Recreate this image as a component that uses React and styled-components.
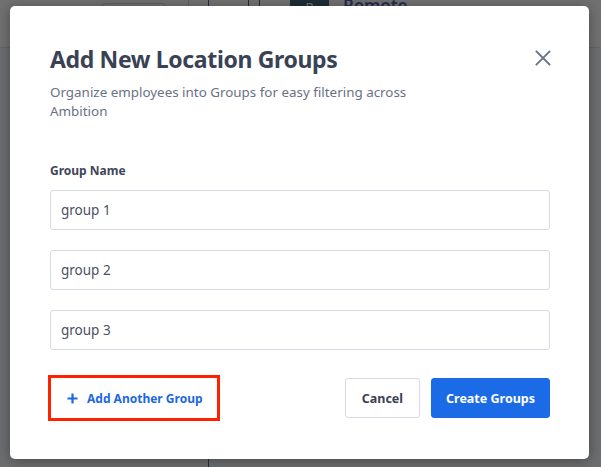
import React from 'react';
import styled, { createGlobalStyle } from 'styled-components';

const GlobalStyle = createGlobalStyle`
  html, body {
    margin: 0;
    padding: 0;
    width: 601px;
    height: 467px;
    overflow: hidden;
    font-family: "Noto Sans", "Open Sans", sans-serif;
    background: #ffffff;
  }
  * { box-sizing: border-box; }
`;

const Page = styled.div`
  position: relative;
  width: 601px;
  height: 467px;
  overflow: hidden;
  background: #f4f5f8;
`;

const TopBar = styled.div`
  display: flex;
  align-items: flex-start;
  height: 48px;
  padding-left: 101px;
  border-bottom: 1px solid #d9dbe2;
  background: #ffffff;
`;

const FilterBox = styled.div`
  width: 65px;
  height: 30px;
  margin-top: 3px;
  border: 1px solid #c9ccd6;
  border-radius: 4px;
`;

const Divider = styled.div`
  width: 1px;
  height: 100%;
  margin-left: ${p => p.$gap}px;
  background: ${p => p.$color};
`;

const Avatar = styled.div`
  width: 39px;
  height: 30px;
  margin-left: 30px;
  margin-top: -10px;
  border-radius: 4px;
  background: #0f3a55;
  color: #ffffff;
  font-size: 13px;
  display: flex;
  align-items: flex-end;
  justify-content: center;
  padding-bottom: 4px;
`;

const TopLink = styled.span`
  margin-left: 14px;
  margin-top: -6px;
  color: #163c9e;
  font-size: 17px;
  font-weight: 600;
`;

const Column = styled.div`
  position: absolute;
  left: 208px;
  top: 48px;
  bottom: 0;
  width: 1px;
  background: #1e3a8a;
`;

const Overlay = styled.div`
  position: absolute;
  inset: 0;
  background: rgba(40, 40, 40, 0.66);
  display: flex;
  align-items: flex-start;
  padding: 6px 0 0 10px;
`;

const Modal = styled.div`
  position: relative;
  width: 579px;
  height: 453px;
  background: #ffffff;
  border-radius: 5px;
  box-shadow: 0 2px 14px rgba(0, 0, 0, 0.35);
  padding: 37px 39px 0 40px;
  display: flex;
  flex-direction: column;
`;

const Title = styled.h2`
  margin: 0;
  font-size: 23px;
  line-height: 32px;
  font-weight: 700;
  color: #394255;
  letter-spacing: -0.35px;
`;

const Subtitle = styled.p`
  margin: 8px 0 0;
  max-width: 370px;
  font-size: 13.4px;
  line-height: 19px;
  color: #697185;
`;

const CloseButton = styled.button`
  position: absolute;
  top: 39px;
  right: 33px;
  width: 26px;
  height: 26px;
  padding: 0;
  border: 0;
  background: transparent;
  display: flex;
  align-items: center;
  justify-content: center;
`;

const Label = styled.div`
  margin-top: 41px;
  font-size: 12px;
  font-weight: 700;
  color: #3f4658;
`;

const Fields = styled.div`
  margin-top: 11px;
  display: flex;
  flex-direction: column;
  gap: 20px;
`;

const Input = styled.input`
  width: 500px;
  height: 40px;
  padding: 0 10px;
  border: 1px solid #d7d9e3;
  border-radius: 3px;
  font-family: inherit;
  font-size: 13.5px;
  color: #4a5163;
  outline: none;
`;

const Footer = styled.div`
  margin-top: 25px;
  width: 500px;
  display: flex;
  align-items: center;
`;

const AddButton = styled.button`
  display: flex;
  align-items: center;
  gap: 9px;
  height: 46px;
  width: 172px;
  margin-left: -2px;
  padding: 0 0 0 16px;
  border: 3.5px solid #ff2200;
  background: #ffffff;
  color: #1d67df;
  font-family: inherit;
  font-size: 12px;
  font-weight: 700;
`;

const Spacer = styled.div`
  flex: 1;
`;

const Button = styled.button`
  height: 40px;
  padding: 0 ${p => (p.$primary ? 14 : 16)}px;
  margin-left: ${p => (p.$primary ? 11 : 0)}px;
  border: 1px solid ${p => (p.$primary ? '#1b6be6' : '#d7d9e3')};
  border-radius: 3px;
  background: ${p => (p.$primary ? '#1b6be6' : '#ffffff')};
  color: ${p => (p.$primary ? '#ffffff' : '#3a4153')};
  font-family: inherit;
  font-size: 12.5px;
  font-weight: 700;
`;

const groups = ['group 1', 'group 2', 'group 3'];

const App = () => {
  return (
    <>
      <GlobalStyle />
      <Page>
        <TopBar>
          <FilterBox />
          <Divider $gap={22} $color="#c9ccd6" />
          <Divider $gap={19} $color="#1e3a8a" />
          <Divider $gap={39} $color="#2b2f3a" />
          <Divider $gap={10} $color="#2b2f3a" />
          <Avatar>R</Avatar>
          <TopLink>Remote</TopLink>
        </TopBar>
        <Column />
        <Overlay>
          <Modal>
            <Title>Add New Location Groups</Title>
            <Subtitle>Organize employees into Groups for easy filtering across Ambition</Subtitle>
            <CloseButton aria-label="Close">
              <svg width="16" height="16" viewBox="0 0 16 16">
                <path d="M1.5 1.5 L14.5 14.5 M14.5 1.5 L1.5 14.5" stroke="#6b7386" strokeWidth="1.8" strokeLinecap="square" />
              </svg>
            </CloseButton>
            <Label>Group Name</Label>
            <Fields>
              {groups.map(g => (
                <Input key={g} defaultValue={g} />
              ))}
            </Fields>
            <Footer>
              <AddButton>
                <svg width="11" height="11" viewBox="0 0 11 11">
                  <path d="M5.5 0.5 V10.5 M0.5 5.5 H10.5" stroke="#1d67df" strokeWidth="2.2" />
                </svg>
                Add Another Group
              </AddButton>
              <Spacer />
              <Button>Cancel</Button>
              <Button $primary>Create Groups</Button>
            </Footer>
          </Modal>
        </Overlay>
      </Page>
    </>
  );
};

export default App;
